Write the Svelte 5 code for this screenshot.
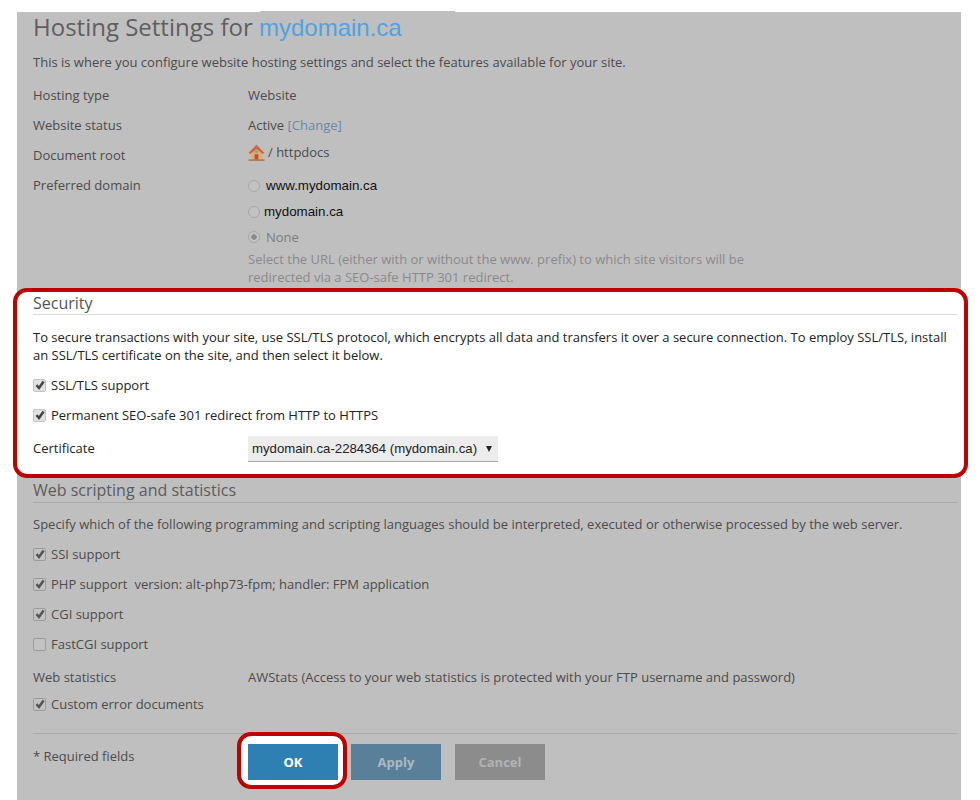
<script>
  const infoRows = [
    { label: 'Hosting type', value: 'Website' },
    { label: 'Website status', value: 'Active', link: '[Change]' }
  ];
  const scriptingOptions = [
    { label: 'SSI support', checked: true },
    { label: 'PHP support', extra: 'version: alt-php73-fpm; handler: FPM application', checked: true },
    { label: 'CGI support', checked: true },
    { label: 'FastCGI support', checked: false }
  ];
</script>

{#snippet checkbox(checked)}
  <span class="check">
    {#if checked}
      <svg width="10" height="10" viewBox="0 0 10 10"><path d="M1.5 5.2 L4 8 L8.6 1.6" fill="none" stroke="currentColor" stroke-width="2.5" /></svg>
    {/if}
  </span>
{/snippet}

<div class="panel">
  <span class="tab-edge"></span>
  <h1>Hosting Settings for <span class="domain">mydomain.ca</span></h1>
  <p class="intro">This is where you configure website hosting settings and select the features available for your site.</p>

  {#each infoRows as row}
    <div class="row">
      <span class="label">{row.label}</span>
      <span>{row.value} {#if row.link}<span class="link">{row.link}</span>{/if}</span>
    </div>
  {/each}

  <div class="row">
    <span class="label">Document root</span>
    <span class="docroot">
      <svg width="17" height="17" viewBox="0 0 17 17">
        <path d="M2.5 8 V15.5 H14.5 V8 L8.5 2.5 Z" fill="#dcae7e" />
        <path d="M0.5 9 L8.5 0.8 L16.5 9 L14.8 10 L8.5 5 L2.2 10 Z" fill="#c8693f" />
        <rect x="6.6" y="10.2" width="3.8" height="5.4" fill="#bf5128" />
        <rect x="7.2" y="6.6" width="2.6" height="2.2" fill="#8b9aa3" />
        <rect x="0.5" y="15.4" width="16" height="1.4" fill="#a9713f" />
      </svg>
      / httpdocs
    </span>
  </div>

  <div class="domains">
    <span class="label">Preferred domain</span>
    <div class="domain-options">
      <div class="radio-row first"><span class="radio"></span><span class="arial www">www.mydomain.ca</span></div>
      <div class="radio-row second"><span class="radio"></span><span class="arial">mydomain.ca</span></div>
      <div class="radio-row faded"><span class="radio on"></span><span class="none">None</span></div>
      <p class="hint">Select the URL (either with or without the www. prefix) to which site visitors will be redirected via a SEO-safe HTTP 301 redirect.</p>
    </div>
  </div>

  <section class="security">
    <h2>Security</h2>
    <p class="desc">To secure transactions with your site, use SSL/TLS protocol, which encrypts all data and transfers it over a secure connection. To employ SSL/TLS, install an SSL/TLS certificate on the site, and then select it below.</p>
    <label class="opt">{@render checkbox(true)}SSL/TLS support</label>
    <label class="opt">{@render checkbox(true)}Permanent SEO-safe 301 redirect from HTTP to HTTPS</label>
    <div class="cert">
      <span class="label">Certificate</span>
      <div class="select"><span>mydomain.ca-2284364 (mydomain.ca)</span><i></i></div>
    </div>
  </section>

  <section class="scripting">
    <h2>Web scripting and statistics</h2>
    <p class="desc">Specify which of the following programming and scripting languages should be interpreted, executed or otherwise processed by the web server.</p>
    {#each scriptingOptions as o}
      <div class="opt">{@render checkbox(o.checked)}<span>{o.label}</span>{#if o.extra}<span class="extra">{o.extra}</span>{/if}</div>
    {/each}
    <div class="row stats">
      <span class="label">Web statistics</span>
      <span>AWStats (Access to your web statistics is protected with your FTP username and password)</span>
    </div>
    <div class="opt custom">{@render checkbox(true)}Custom error documents</div>
  </section>

  <div class="footer">
    <span class="required">* Required fields</span>
    <div class="ok-ring"><button class="btn ok">OK</button></div>
    <button class="btn apply">Apply</button>
    <button class="btn cancel">Cancel</button>
  </div>
</div>

<style>
  :global(body) {
    margin: 0;
    background: #fff;
  }

  .panel {
    position: relative;
    box-sizing: border-box;
    width: 944px;
    height: 788px;
    margin: 12px 0 0 17px;
    padding: 0 4px 0 16px;
    background: #bfbfbf;
    color: #4c4c4c;
    font: 13px/18px "Open Sans", sans-serif;
  }

  .tab-edge {
    position: absolute;
    left: 243px;
    top: -1px;
    width: 195px;
    height: 1px;
    background: #bfbfbf;
  }

  h1 {
    margin: 0;
    height: 32px;
    font-size: 24px;
    font-weight: 400;
    line-height: 30px;
    color: #5f5f5f;
  }

  .domain {
    font-family: "Liberation Sans", sans-serif;
    color: #4fa3e3;
  }

  p {
    margin: 0;
  }

  .intro {
    padding: 9px 0;
  }

  .row {
    display: flex;
    align-items: center;
    height: 30px;
  }

  .label {
    flex: 0 0 215px;
  }

  .link {
    color: #6a87a8;
  }

  .docroot {
    display: flex;
    align-items: center;
    gap: 3px;
    margin-top: -6px;
  }

  .domains {
    display: flex;
    height: 108px;
    padding-top: 6px;
  }

  .domain-options {
    width: 510px;
  }

  .radio-row {
    display: flex;
    align-items: center;
    height: 26px;
  }

  .radio-row.first {
    height: 18px;
    margin-bottom: 4px;
    padding-top: 1px;
  }

  .radio-row.second {
    height: 24px;
    margin-top: -1px;
    padding-top: 2px;
  }

  .radio {
    box-sizing: border-box;
    width: 12px;
    height: 12px;
    margin-right: 4px;
    border: 1px solid #a6a6a6;
    border-radius: 50%;
    background: #c2c2c2;
  }

  .radio.on {
    background: radial-gradient(circle, #8a8a8a 0 2.5px, #c4c4c4 3px);
  }

  .arial {
    font-family: "Liberation Sans", sans-serif;
    font-size: 13.33px;
    color: #111;
  }

  .www {
    margin-left: 2px;
  }

  .none {
    margin-left: 2px;
    color: #7d7d7d;
  }

  .hint {
    color: #8a8a8a;
  }

  h2 {
    margin: 0;
    height: 24px;
    border-bottom: 1px solid #a8a8a8;
    font-size: 16px;
    font-weight: 400;
    line-height: 24px;
    color: #5c5c5c;
  }

  .desc {
    padding: 12px 0 6px;
  }

  .opt {
    display: flex;
    align-items: center;
    height: 30px;
  }

  .check {
    box-sizing: border-box;
    display: flex;
    align-items: center;
    justify-content: center;
    width: 13px;
    height: 13px;
    margin-right: 5px;
    border: 1px solid #9c9c9c;
    border-radius: 2px;
    background: #c2c2c2;
    color: #555;
  }

  .extra {
    margin-left: 7px;
  }

  .security {
    box-sizing: border-box;
    position: relative;
    height: 190px;
    margin: 4px -11px 0 -20px;
    padding: 0 7px 0 16px;
    border: 4px solid #c00000;
    border-radius: 14px;
    background: #fff;
    color: #222;
  }

  .security h2 {
    height: 22px;
    border-color: #d9d9d9;
    line-height: 22px;
    color: #555;
  }

  .security .desc {
    padding: 13px 0 6px;
  }

  .security .check {
    border-color: #c4c4c4;
    background: #e2e2e2;
    color: #444;
  }

  .cert {
    display: flex;
    align-items: center;
    height: 36px;
  }

  .select {
    box-sizing: border-box;
    display: flex;
    align-items: center;
    justify-content: space-between;
    flex: 0 0 250px;
    height: 26px;
    margin-top: 2px;
    padding: 0 6px 0 4px;
    border-bottom: 1px solid #aaa;
    background: #ececec;
    font-family: "Liberation Sans", sans-serif;
    font-size: 13.2px;
    color: #222;
    white-space: nowrap;
  }

  .select span {
    padding-top: 1px;
  }

  .select i {
    width: 0;
    height: 0;
    border-top: 6px solid #222;
    border-left: 3.5px solid transparent;
    border-right: 3.5px solid transparent;
  }

  .stats {
    height: 36px;
  }

  .custom {
    margin-top: -6px;
  }

  .footer {
    position: relative;
    display: flex;
    align-items: flex-start;
    margin-top: 14px;
    padding-top: 10px;
    border-top: 1px solid #aaa;
  }

  .required {
    flex: 0 0 204px;
    padding-top: 3px;
  }

  .ok-ring {
    box-sizing: border-box;
    width: 110px;
    margin-top: -12px;
    padding: 8px 7px 5px;
    border: 4px solid #c00000;
    border-radius: 14px;
    background: #fff;
  }

  .btn {
    display: block;
    width: 90px;
    height: 36px;
    padding: 0;
    border: 0;
    font: 700 13px "Open Sans", sans-serif;
  }

  .ok {
    background: #2e7fb2;
    color: #fff;
  }

  .apply {
    margin-left: 4px;
    background: #5a7f99;
    color: #a9b9c4;
  }

  .cancel {
    margin-left: 14px;
    background: #8c8c8c;
    color: #b3b3b3;
  }
</style>
